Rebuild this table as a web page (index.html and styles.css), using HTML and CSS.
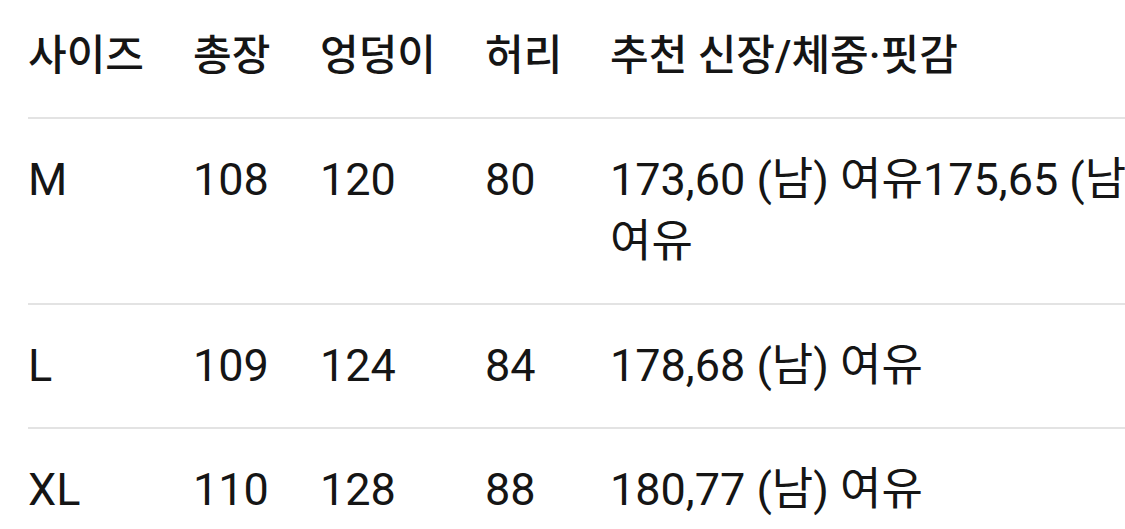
FILE: index.html
```html
<!DOCTYPE html>
<html lang="ko">
<head>
<meta charset="utf-8">
<title>사이즈</title>
<link rel="stylesheet" href="styles.css">
</head>
<body>
<table class="size-table">
  <colgroup>
    <col class="c1"><col class="c2"><col class="c3"><col class="c4"><col class="c5">
  </colgroup>
  <thead>
    <tr class="head-row">
      <th>사이즈</th><th>총장</th><th>엉덩이</th><th>허리</th><th>추천 신장/체중·핏감</th>
    </tr>
  </thead>
  <tbody>
    <tr class="row">
      <td>M</td><td>108</td><td>120</td><td>80</td><td>173,60 (남) 여유175,65 (남) 여유</td>
    </tr>
    <tr class="row">
      <td>L</td><td>109</td><td>124</td><td>84</td><td>178,68 (남) 여유</td>
    </tr>
    <tr class="row">
      <td>XL</td><td>110</td><td>128</td><td>88</td><td>180,77 (남) 여유</td>
    </tr>
  </tbody>
</table>
</body>
</html>
```

FILE: styles.css
```css
html, body {
  margin: 0;
  padding: 0;
  background: #ffffff;
  overflow: hidden;
}
body {
  font-family: Roboto, "Noto Sans CJK KR", sans-serif;
  color: #151515;
}
.size-table {
  margin-left: 28px;
  border-collapse: collapse;
  table-layout: fixed;
  width: 1142px;
  font-size: 45px;
  line-height: 62px;
}
.c1 { width: 165px; }
.c2 { width: 127px; }
.c3 { width: 165px; }
.c4 { width: 125px; }
.c5 { width: 560px; }
.size-table th,
.size-table td {
  text-align: left;
  vertical-align: top;
  padding: 0;
  white-space: normal;
}
.head-row th {
  font-size: 42px;
  font-weight: 500;
  padding: 25px 0 30px;
}
.row td {
  font-weight: 400;
  padding: 30px 0;
  border-top: 2px solid #e3e3e3;
}
```
